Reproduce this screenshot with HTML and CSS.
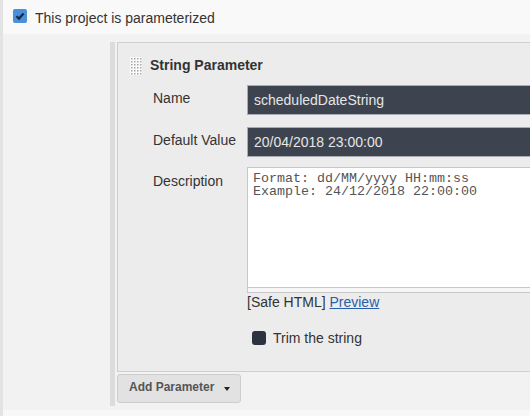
FILE: index.html
```html
<!DOCTYPE html>
<html>
<head>
<meta charset="utf-8">
<link rel="stylesheet" href="styles.css">
</head>
<body>
<div class="page">
  <div class="top-row">
    <span class="cb-checked">
      <svg width="14" height="14" viewBox="0 0 14 14"><path d="M3.5 7.2 L6 9.6 L10.6 4.6" fill="none" stroke="#1d2735" stroke-width="2.2"/></svg>
    </span>
    <span class="top-label">This project is parameterized</span>
  </div>
  <div class="main">
    <div class="repeat">
      <div class="panel">
        <div class="panel-head">
          <svg class="handle" width="12" height="18" viewBox="0 0 12 18">
            <rect x="0" y="0" width="12" height="18" fill="#fbfbfb"/>
            <g fill="#a8a8a8">
              <rect x="1" y="1" width="1.5" height="1.5"/><rect x="4" y="1" width="1.5" height="1.5"/><rect x="7" y="1" width="1.5" height="1.5"/><rect x="10" y="1" width="1.5" height="1.5"/>
              <rect x="1" y="4" width="1.5" height="1.5"/><rect x="4" y="4" width="1.5" height="1.5"/><rect x="7" y="4" width="1.5" height="1.5"/><rect x="10" y="4" width="1.5" height="1.5"/>
              <rect x="1" y="7" width="1.5" height="1.5"/><rect x="4" y="7" width="1.5" height="1.5"/><rect x="7" y="7" width="1.5" height="1.5"/><rect x="10" y="7" width="1.5" height="1.5"/>
              <rect x="1" y="10" width="1.5" height="1.5"/><rect x="4" y="10" width="1.5" height="1.5"/><rect x="7" y="10" width="1.5" height="1.5"/><rect x="10" y="10" width="1.5" height="1.5"/>
              <rect x="1" y="13" width="1.5" height="1.5"/><rect x="4" y="13" width="1.5" height="1.5"/><rect x="7" y="13" width="1.5" height="1.5"/><rect x="10" y="13" width="1.5" height="1.5"/>
              <rect x="1" y="16" width="1.5" height="1.5"/><rect x="4" y="16" width="1.5" height="1.5"/><rect x="7" y="16" width="1.5" height="1.5"/><rect x="10" y="16" width="1.5" height="1.5"/>
            </g>
          </svg>
          <span class="panel-title">String Parameter</span>
        </div>
        <div class="field">
          <div class="label">Name</div>
          <div class="input">scheduledDateString</div>
        </div>
        <div class="field">
          <div class="label">Default Value</div>
          <div class="input">20/04/2018 23:00:00</div>
        </div>
        <div class="field field-desc">
          <div class="label label-desc">Description</div>
          <div class="desc-box">
            <div class="textarea">Format: dd/MM/yyyy HH:mm:ss
Example: 24/12/2018 22:00:00</div>
            <div class="ta-handle"></div>
            <div class="safe">[Safe HTML] <a class="preview" href="#">Preview</a></div>
          </div>
        </div>
        <div class="trim-row">
          <span class="cb-dark"></span>
          <span class="trim-label">Trim the string</span>
        </div>
      </div>
      <div class="btn">Add Parameter <span class="caret"></span></div>
    </div>
  </div>
</div>
</body>
</html>
```

FILE: styles.css
```css
html, body {
  margin: 0;
  padding: 0;
  background: #f8f8f8;
}
body {
  font-family: "Liberation Sans", Arial, sans-serif;
  color: #333;
  width: 530px;
  height: 416px;
  overflow: hidden;
}
.page {
  border-left: 3px solid #e3e3e3;
  height: 416px;
  box-sizing: border-box;
  overflow: hidden;
}
.top-row {
  height: 34px;
  display: flex;
  align-items: center;
  padding-left: 10px;
  background: #f9f9f9;
}
.cb-checked {
  width: 14px;
  height: 14px;
  background: #4a8fdc;
  border-radius: 2px;
  display: inline-block;
  margin-top: -2px;
}
.cb-checked svg { display: block; }
.top-label {
  font-size: 14px;
  margin-left: 8px;
  color: #333;
  margin-top: 1px;
}
.main {
  background: #f2f2f2;
  padding: 8px 0 4px 107px;
  overflow: hidden;
}
.repeat {
  border-left: 5px solid #dcdcdc;
  padding: 0 0 3px 2px;
}
.panel {
  width: 412px;
  height: 328px;
  background: #ececec;
  border: 1px solid #cfcfcf;
  border-right: none;
  box-sizing: content-box;
}
.panel-head {
  display: flex;
  align-items: center;
  padding: 12px 0 0 12px;
  height: 20px;
}
.handle { display: block; margin-top: 1px; }
.panel-title {
  font-weight: bold;
  font-size: 14px;
  margin-left: 8px;
  color: #333;
}
.field {
  display: flex;
  align-items: flex-start;
  margin-top: 10px;
}
.field + .field { margin-top: 12px; }
.label {
  width: 94px;
  padding-left: 35px;
  font-size: 14px;
  line-height: 16px;
  padding-top: 5px;
  color: #333;
}
.input {
  flex: 1;
  height: 30px;
  box-sizing: border-box;
  background: #3d4450;
  border: 1px solid #a9adb3;
  border-right: none;
  color: #e6e6e6;
  font-size: 14px;
  line-height: 28px;
  padding-left: 6px;
}
.field.field-desc {
  margin-top: 10px;
}
.label-desc { padding-top: 6px; }
.desc-box { flex: 1; }
.textarea {
  height: 121px;
  box-sizing: border-box;
  background: #fff;
  border: 1px solid #c8c8c8;
  border-right: none;
  font-family: "Liberation Mono", "Courier New", monospace;
  font-size: 13.33px;
  line-height: 13px;
  color: #555;
  padding: 4px 0 0 5px;
  white-space: pre;
}
.ta-handle {
  height: 4px;
  background: #f6f6f6;
  border: 1px solid #c8c8c8;
  border-top: none;
  border-right: none;
}
.safe {
  font-size: 14px;
  color: #333;
  margin-top: 1px;
  line-height: 16px;
}
.preview {
  color: #2a5ea8;
  text-decoration: underline;
}
.trim-row {
  display: flex;
  align-items: center;
  padding-left: 134px;
  margin-top: 20px;
}
.cb-dark {
  width: 14px;
  height: 14px;
  background: #2d3240;
  border-radius: 3px;
  display: inline-block;
}
.trim-label {
  font-size: 14px;
  margin-left: 7px;
  color: #333;
}
.btn {
  margin-top: 2px;
  width: 124px;
  height: 29px;
  box-sizing: border-box;
  background: #e2e2e2;
  border: 1px solid #cdcdcd;
  border-radius: 3px;
  font-size: 12px;
  font-weight: bold;
  color: #555;
  display: flex;
  align-items: center;
  padding-left: 11px;
  padding-bottom: 3px;
}
.caret {
  width: 0;
  height: 0;
  border-left: 3.5px solid transparent;
  border-right: 3.5px solid transparent;
  border-top: 4px solid #222;
  margin-left: 10px;
  margin-top: 4px;
}
```
